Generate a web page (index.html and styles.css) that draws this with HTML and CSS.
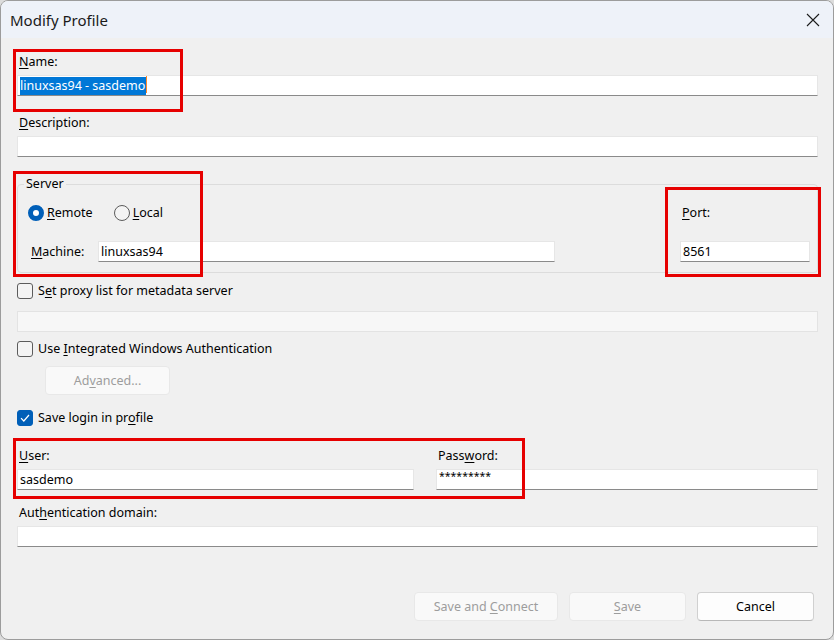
FILE: index.html
```html
<!DOCTYPE html>
<html lang="en">
<head>
  <meta charset="UTF-8" />
  <title>Modify Profile</title>
  <link rel="stylesheet" href="styles.css">
</head>
<body>
  <div class="window">
    <div class="titlebar">
      <span class="title">Modify Profile</span>
      <svg class="close" width="14" height="14" viewBox="0 0 14 14">
        <path d="M1 1L13 13M13 1L1 13" stroke="#1c1c1c" stroke-width="1.1" fill="none" />
      </svg>
    </div>

    <div class="content">
      <div class="label first"><u>N</u>ame:</div>
      <div class="input"><span class="selected">linuxsas94 - sasdemo</span><span class="caret"></span></div>

      <div class="label spaced"><u>D</u>escription:</div>
      <div class="input"></div>

      <!-- Server group -->
      <fieldset class="server">
        <legend>Server</legend>
        <div class="server-grid">
          <div class="radios">
            <label class="radio"><span class="dot on"></span><span><u>R</u>emote</span></label>
            <label class="radio"><span class="dot"></span><span><u>L</u>ocal</span></label>
          </div>
          <div class="port-label"><u>P</u>ort:</div>
          <div class="machine">
            <span class="machine-label"><u>M</u>achine:</span>
            <div class="input grow">linuxsas94</div>
          </div>
          <div class="input">8561</div>
        </div>
      </fieldset>

      <div class="check proxy"><span class="box"></span><span>S<u>e</u>t proxy list for metadata server</span></div>
      <div class="input disabled"></div>

      <div class="check iwa"><span class="box"></span><span>Use <u>I</u>ntegrated Windows Authentication</span></div>
      <button class="btn off advanced" disabled>Ad<u>v</u>anced...</button>

      <div class="check saved">
        <span class="box checked">
          <svg width="10" height="8" viewBox="0 0 10 8"><path d="M1 4.2L3.8 7L9 1" stroke="#fff" stroke-width="1.2" fill="none" /></svg>
        </span>
        <span>Save login in pr<u>o</u>file</span>
      </div>

      <div class="login">
        <div>
          <div class="label"><u>U</u>ser:</div>
          <div class="input">sasdemo</div>
        </div>
        <div>
          <div class="label">Pass<u>w</u>ord:</div>
          <div class="input secret">*********</div>
        </div>
      </div>

      <div class="label domain">Aut<u>h</u>entication domain:</div>
      <div class="input"></div>

      <div class="footer">
        <button class="btn off wide" disabled>Save and <u>C</u>onnect</button>
        <button class="btn off" disabled><u>S</u>ave</button>
        <button class="btn">Cancel</button>
      </div>
    </div>

    <!-- highlight marks drawn over the dialog -->
    <div class="mark mark-name"></div>
    <div class="mark mark-server"></div>
    <div class="mark mark-port"></div>
    <div class="mark mark-login"></div>
  </div>
</body>
</html>
```

FILE: styles.css
```css
html, body {
  margin: 0;
  padding: 0;
  background: #dcdcdc;
}
body {
  font-family: "Noto Sans", "Liberation Sans", sans-serif;
  font-size: 12.5px;
  color: #000;
}
u {
  text-underline-offset: 2px;
}
.window {
  position: relative;
  box-sizing: border-box;
  width: 834px;
  height: 640px;
  border: 1px solid #9c9c9c;
  border-radius: 8px;
  background: #f0f0f0;
  overflow: hidden;
}
.titlebar {
  height: 37px;
  background: #eef2f9;
  display: flex;
  align-items: center;
  justify-content: space-between;
  padding: 0 13px 0 9px;
}
.title {
  font-size: 15px;
  color: #1a1a1a;
}
.close {
  display: block;
}
.content {
  padding: 0 15px 0 16px;
}
.label {
  height: 16px;
  line-height: 16px;
  margin-bottom: 5px;
  padding-left: 2px;
  white-space: nowrap;
}
.label.first {
  margin-top: 16px;
}
.label.spaced {
  margin-top: 19px;
}
.input {
  box-sizing: border-box;
  height: 21px;
  line-height: 19px;
  background: #fff;
  border: 1px solid #e6e6e6;
  border-bottom-color: #8a8a8a;
  padding-left: 2px;
  white-space: nowrap;
  overflow: hidden;
}
.input.disabled {
  background: #f7f7f7;
  border-color: #e3e3e3;
  margin-top: 12px;
}
.input.secret {
  font-size: 10.5px;
  line-height: 13px;
}
.selected {
  display: inline-block;
  background: #0078d7;
  color: #fff;
  line-height: 18px;
  padding-right: 1px;
}
.caret {
  display: inline-block;
  width: 1px;
  height: 17px;
  background: #ff8828;
  vertical-align: top;
}

/* Server group */
.server {
  margin: 19px 0 0;
  padding: 13px 7px 10px 10px;
  border: 1px solid #dcdcdc;
  border-radius: 4px;
}
.server legend {
  margin-left: -4px;
  padding: 0 2px;
  line-height: 16px;
}
.server-grid {
  display: grid;
  grid-template-columns: 527px 130px;
  column-gap: 125px;
  row-gap: 20px;
}
.radios {
  display: flex;
  gap: 21px;
  height: 16px;
  line-height: 16px;
}
.radio {
  display: flex;
  align-items: center;
  gap: 3px;
}
.dot {
  box-sizing: border-box;
  width: 16px;
  height: 16px;
  border-radius: 50%;
  border: 1px solid #5c5c5c;
  background: #f4f4f4;
}
.dot.on {
  border: 5px solid #005fb8;
  background: #fff;
}
.port-label {
  line-height: 16px;
  padding-left: 2px;
}
.machine {
  display: flex;
  align-items: center;
}
.machine-label {
  width: 70px;
  padding-left: 3px;
  box-sizing: border-box;
}
.grow {
  flex: 1;
}

/* Check boxes */
.check {
  display: flex;
  align-items: center;
  gap: 5px;
  height: 16px;
  line-height: 16px;
  white-space: nowrap;
}
.box {
  box-sizing: border-box;
  width: 16px;
  height: 16px;
  border: 1px solid #5c5c5c;
  border-radius: 3px;
  background: #f4f4f4;
  display: flex;
  align-items: center;
  justify-content: center;
}
.box.checked {
  border-color: #005fb8;
  background: #005fb8;
}
.check.proxy {
  margin-top: 10px;
}
.check.iwa {
  margin-top: 9px;
}
.check.saved {
  margin-top: 15px;
}

/* Buttons */
.btn {
  box-sizing: border-box;
  width: 117px;
  height: 29px;
  font-family: inherit;
  font-size: 12.5px;
  color: #000;
  background: #fdfdfd;
  border: 1px solid #d0d0d0;
  border-bottom-color: #b8b8b8;
  border-radius: 4px;
  padding: 0;
}
.btn.off {
  color: #9d9d9d;
  background: #f9f9f9;
  border-color: #e8e8e8;
}
.btn.wide {
  width: 144px;
}
.advanced {
  display: block;
  width: 125px;
  margin: 9px 0 0 28px;
}

.login {
  display: grid;
  grid-template-columns: 397px 1fr;
  column-gap: 22px;
  margin-top: 22px;
}
.label.domain {
  margin-top: 15px;
}
.footer {
  display: flex;
  justify-content: flex-end;
  gap: 11px;
  margin-top: 45px;
  padding-right: 4px;
}

/* red marks */
.mark {
  position: absolute;
  box-sizing: border-box;
  border: 3px solid #e60000;
}
.mark-name {
  left: 12px;
  top: 48px;
  width: 170px;
  height: 63px;
}
.mark-server {
  left: 12px;
  top: 170px;
  width: 190px;
  height: 106px;
}
.mark-port {
  left: 664px;
  top: 186px;
  width: 156px;
  height: 90px;
}
.mark-login {
  left: 12px;
  top: 437px;
  width: 512px;
  height: 61px;
}
```
